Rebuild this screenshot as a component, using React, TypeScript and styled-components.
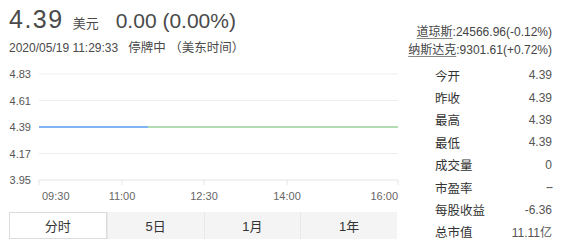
import React from 'react';
import styled, { createGlobalStyle } from 'styled-components';

const GlobalStyle = createGlobalStyle`
  html, body {
    margin: 0;
    padding: 0;
    background: #fff;
  }
  body {
    font-family: "Liberation Sans", "Noto Sans CJK SC", sans-serif;
    color: #333;
  }
`;

const Page = styled.div`
  width: 580px;
  height: 252px;
  overflow: hidden;
`;

const Header = styled.div`
  display: flex;
  justify-content: space-between;
  align-items: flex-start;
`;

const Quote = styled.div`
  padding: 5px 0 0 9px;
`;

const PriceLine = styled.div`
  display: flex;
  align-items: baseline;
  height: 28px;
  line-height: 28px;
  color: #4a4a4a;
`;

const Price = styled.span`
  font-size: 25px;
  letter-spacing: 1.5px;
`;

const Currency = styled.span`
  font-size: 13px;
  margin-left: 9px;
`;

const Change = styled.span`
  font-size: 21px;
  margin-left: 17px;
`;

const MetaLine = styled.div`
  margin-top: 7px;
  height: 16px;
  line-height: 16px;
  font-size: 12px;
  color: #4a4a4a;
  white-space: nowrap;
`;

const Status = styled.span`
  margin-left: 10px;
  font-size: 12.5px;
`;

const Indices = styled.div`
  padding: 23px 28px 0 0;
  text-align: right;
  font-size: 12px;
  line-height: 18px;
  color: #444;
`;

const IndexName = styled.span`
  text-decoration: underline;
  text-decoration-color: #888;
  text-underline-offset: 2px;
`;

const Body = styled.div`
  display: flex;
`;

const ChartColumn = styled.div`
  width: 400px;
  display: flex;
  flex-direction: column;
`;

const TabBar = styled.div`
  display: flex;
  margin: 9px 0 0 9px;
  width: 388px;
  height: 27px;
  background: #f4f4f4;
`;

const Tab = styled.div<{ $active?: boolean }>`
  flex: 1;
  display: flex;
  align-items: center;
  justify-content: center;
  font-size: 13px;
  color: #333;
  box-sizing: border-box;
  background: ${p => (p.$active ? '#fff' : 'transparent')};
  border: ${p => (p.$active ? '1px solid #dcdcdc' : 'none')};
  & + & {
    border-left: 1px solid #e8e8e8;
  }
`;

const Stats = styled.div`
  flex: 1;
  padding: 5px 28px 0 35px;
`;

const StatRow = styled.div`
  display: flex;
  justify-content: space-between;
  align-items: center;
  height: 22.4px;
  font-size: 12.5px;
`;

const StatLabel = styled.span`
  color: #333;
`;

const StatValue = styled.span<{ $dash?: boolean }>`
  color: #555;
  font-size: 12px;
  letter-spacing: ${p => (p.$dash ? '-1px' : 'normal')};
`;

const gridYs = [15, 41.5, 68, 94.5, 121];
const yLabels = ['4.83', '4.61', '4.39', '4.17', '3.95'];
const ticks = [39, 122, 204, 287, 398];

const times: { t: string; x: number; anchor: 'start' | 'middle' | 'end' }[] = [
  { t: '09:30', x: 42, anchor: 'start' },
  { t: '11:00', x: 122, anchor: 'middle' },
  { t: '12:30', x: 204, anchor: 'middle' },
  { t: '14:00', x: 287, anchor: 'middle' },
  { t: '16:00', x: 398, anchor: 'end' },
];

const stats = [
  ['今开', '4.39'],
  ['昨收', '4.39'],
  ['最高', '4.39'],
  ['最低', '4.39'],
  ['成交量', '0'],
  ['市盈率', '--'],
  ['每股收益', '-6.36'],
  ['总市值', '11.11亿'],
];

const tabs = ['分时', '5日', '1月', '1年'];

const Chart = () => (
  <svg width="400" height="144" style={{ display: 'block' }}>
    {gridYs.map((y, i) => (
      <g key={y}>
        <line x1={39} x2={398} y1={y} y2={y} stroke={i === 4 ? '#e4e4e4' : '#eeeeee'} strokeWidth={1} />
        <text
          x={31}
          y={y + 4}
          textAnchor="end"
          fontSize="11"
          fill="#555"
          fontFamily='"Liberation Sans", sans-serif'
        >
          {yLabels[i]}
        </text>
      </g>
    ))}
    {ticks.map(x => (
      <line key={x} x1={x} x2={x} y1={121} y2={126} stroke="#e4e4e4" strokeWidth={1} />
    ))}
    <line x1={39} x2={148} y1={68} y2={68} stroke="#5b9cf5" strokeWidth={1.6} />
    <line x1={148} x2={398} y1={68} y2={68} stroke="#9dd39b" strokeWidth={1.6} />
    {times.map(t => (
      <text
        key={t.t}
        x={t.x}
        y={141}
        textAnchor={t.anchor}
        fontSize="11"
        fill="#666"
        fontFamily='"Liberation Sans", sans-serif'
      >
        {t.t}
      </text>
    ))}
  </svg>
);

export default function App() {
  return (
    <Page>
      <GlobalStyle />
      <Header>
        <Quote>
          <PriceLine>
            <Price>4.39</Price>
            <Currency>美元</Currency>
            <Change>0.00 (0.00%)</Change>
          </PriceLine>
          <MetaLine>
            2020/05/19 11:29:33
            <Status>停牌中 （美东时间）</Status>
          </MetaLine>
        </Quote>
        <Indices>
          <div>
            <IndexName>道琼斯</IndexName>:24566.96(-0.12%)
          </div>
          <div>
            <IndexName>纳斯达克</IndexName>:9301.61(+0.72%)
          </div>
        </Indices>
      </Header>
      <Body>
        <ChartColumn>
          <Chart />
          <TabBar>
            {tabs.map((t, i) => (
              <Tab key={t} $active={i === 0}>
                {t}
              </Tab>
            ))}
          </TabBar>
        </ChartColumn>
        <Stats>
          {stats.map(([k, v]) => (
            <StatRow key={k}>
              <StatLabel>{k}</StatLabel>
              <StatValue $dash={v === '--'}>{v}</StatValue>
            </StatRow>
          ))}
        </Stats>
      </Body>
    </Page>
  );
}
